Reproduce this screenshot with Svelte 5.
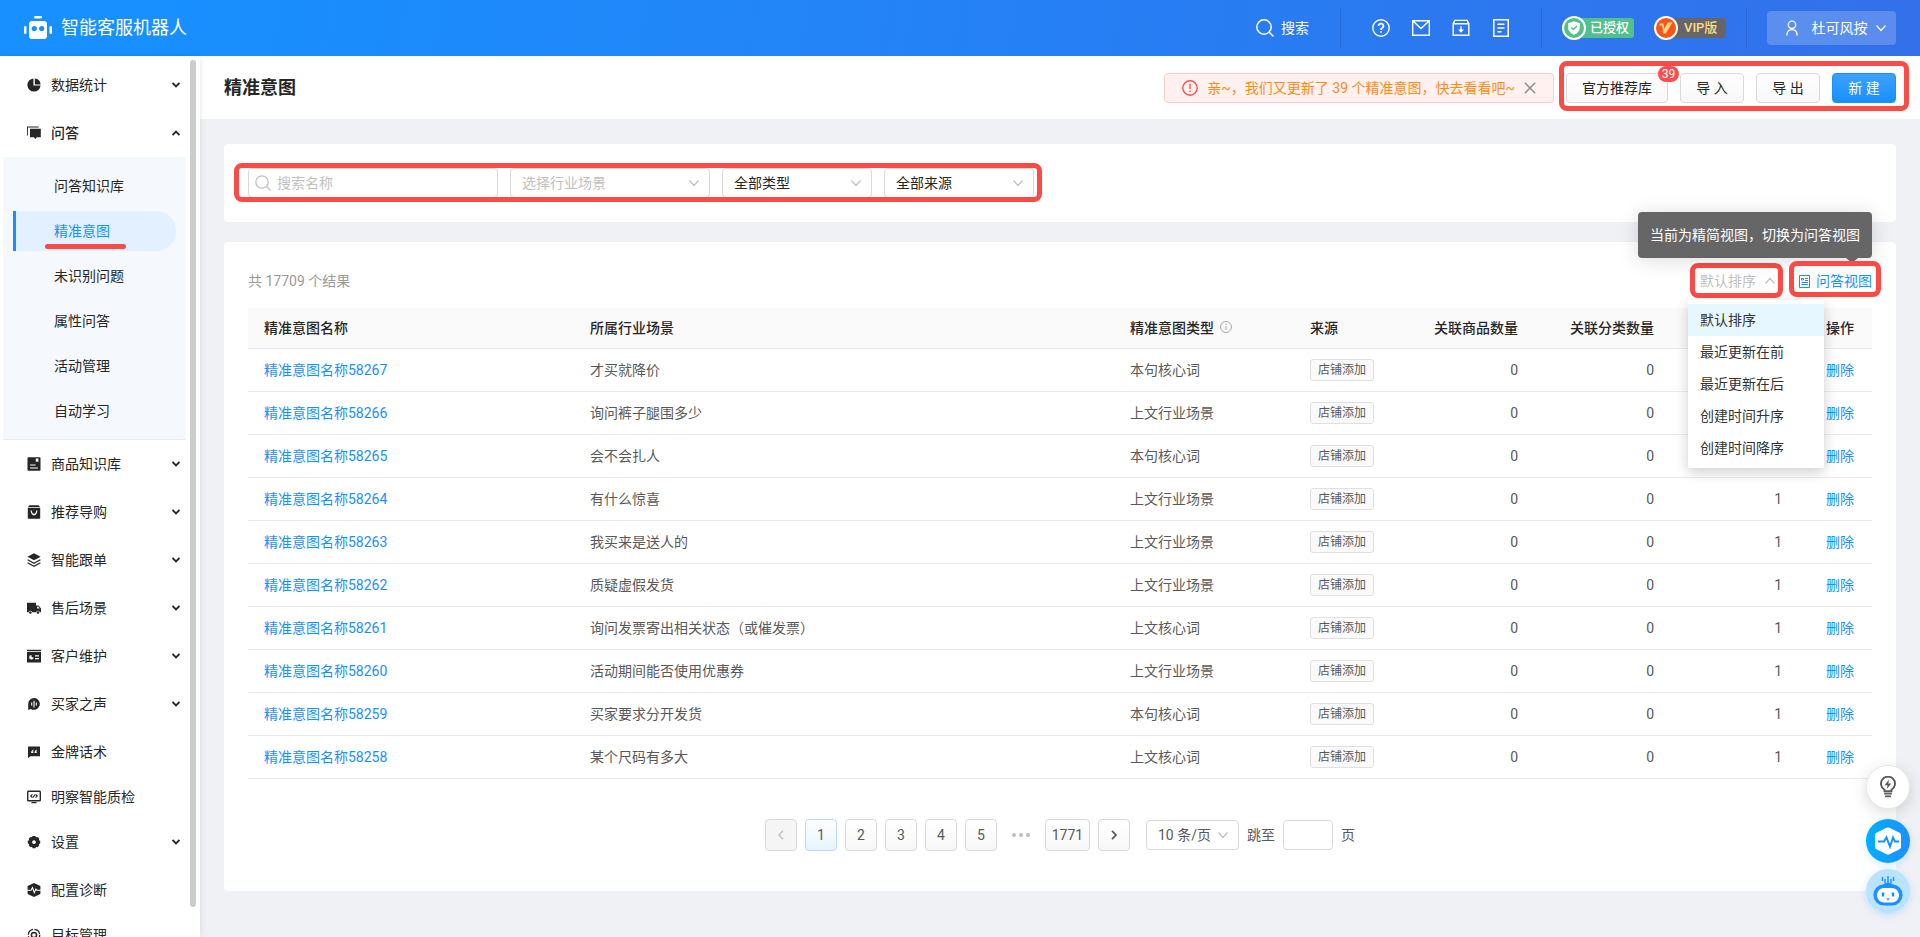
<svelte:options runes={true} />

<script lang="ts">
	type MenuItem = { label: string; icon: string; children?: string[]; leaf?: boolean };

	// sidebar glyphs, drawn on a 14x14 grid
	const icons: Record<string, string> = {
		pie: '<path d="M6.4 .4A6.6 6.6 0 1 0 13.6 7.6H6.4z"/><path d="M7.8 .4A6.6 6.6 0 0 1 13.6 6.4H7.8z"/>',
		chat: '<path d="M.3 9.4V1h11.4" fill="none" stroke="currentColor" stroke-width="1.2"/><path d="M3 2.8h10.8v8.4h-4L8.4 13l-1.6-1.8H3z"/>',
		book: '<path fill-rule="evenodd" d="M1.2 .3h11.6q.7 0 .7.7v12q0 .7-.7.7H1.2q-.7 0-.7-.7V1q0-.7.7-.7zM8.8 1.4v3.8l1.3-.9 1.3.9V1.4zM3 7.4h5.6v1H3zM3 10.4h8v1.1H3z"/>',
		bag: '<path d="M2.4 .2h9.2L13 2H1z"/><path fill-rule="evenodd" d="M.8 2.8h12.4V13q0 .8-.8.8H1.6q-.8 0-.8-.8zM3.6 5.6C3.8 12 10.2 12 10.4 5.6H9.2C9 10 5 10 4.8 5.6z"/>',
		layers: '<path d="M7 .2l6.6 3.5L7 7.2.4 3.7z"/><path d="M.6 6.8L7 10.2l6.4-3.4M.6 9.8L7 13.2l6.4-3.4" fill="none" stroke="currentColor" stroke-width="1.3"/>',
		truck: '<path d="M0 1.8h9v2.7h2.6L14 7.4v3.8h-1.1a1.9 1.9 0 0 0-3.7 0H5.3a1.9 1.9 0 0 0-3.7 0H0z"/><path d="M10.2 5.6h1.1l1.3 1.8h-2.4z" fill="#fff"/><circle cx="3.4" cy="11.5" r="1.3"/><circle cx="11" cy="11.5" r="1.3"/>',
		card: '<path d="M0 .8h14v1.4H0z"/><path fill-rule="evenodd" d="M0 3h14v10.4H0zM8 6.2v1.2h4V6.2zm0 2.8v1.2h4V9z"/><path d="M4.4 6A2.3 2.3 0 1 0 6.7 8.8L4.6 8z" fill="#fff"/>',
		voice: '<path d="M7 1a5.9 5.9 0 1 1-3.2 10.9L1.2 13V7A5.9 5.9 0 0 1 7 1z"/><path d="M4.7 5.4v3.2M7 3.8v6.6M9.3 5.4v3.2" stroke="#fff" stroke-width="1.1"/>',
		quote: '<path d="M1 1.6h12v9.6H3.4L1 13.2z"/><path d="M6.7 4.6q-2.6.5-2.6 3.5h2.2V6.2h-.9q.2-.7 1.3-1zM10.1 4.6q-2.6.5-2.6 3.5h2.2V6.2h-.9q.2-.7 1.3-1z" fill="#fff"/>',
		screen: '<rect x=".7" y="1.2" width="12.6" height="9.6" rx=".8" fill="none" stroke="currentColor" stroke-width="1.4"/><path d="M4.5 12.6h5M5.4 4.3L3.7 6l1.7 1.7M8.6 4.3L10.3 6 8.6 7.7M5.9 7.3l2.2-2.6" fill="none" stroke="currentColor" stroke-width="1.1"/>',
		gear: '<path fill-rule="evenodd" d="M5.6.9h2.8l.6 1.4 1.5-.4 1.7 1.7-.4 1.6 1.4.5v2.8l-1.4.5.4 1.6-1.7 1.7-1.5-.5-.6 1.4H5.6L5 11.8l-1.5.5-1.7-1.7.4-1.6L.8 8.500V5.700l1.400-.5-.4-1.600 1.700-1.700 1.500.4zM7 5.200a1.900 1.900 0 1 0 .01 0z"/>',
		pulse: '<path d="M7 0l6.400 3v8L7 14 .6 11V3z"/><path d="M0 7.200h4l1.500-2.700L7.300 9.600 9 6l.8 1.200H14" fill="none" stroke="#fff" stroke-width="1.1"/>',
		target: '<circle cx="7" cy="7" r="5.7" fill="none" stroke="currentColor" stroke-width="1.3" stroke-dasharray="7.4 1.5"/><circle cx="7" cy="7" r="2.6" fill="none" stroke="currentColor" stroke-width="1.5"/>'
	};

	const menu: MenuItem[] = [
		{ label: '数据统计', icon: 'pie' },
		{
			label: '问答',
			icon: 'chat',
			children: ['问答知识库', '精准意图', '未识别问题', '属性问答', '活动管理', '自动学习']
		},
		{ label: '商品知识库', icon: 'book' },
		{ label: '推荐导购', icon: 'bag' },
		{ label: '智能跟单', icon: 'layers' },
		{ label: '售后场景', icon: 'truck' },
		{ label: '客户维护', icon: 'card' },
		{ label: '买家之声', icon: 'voice' },
		{ label: '金牌话术', icon: 'quote', leaf: true },
		{ label: '明察智能质检', icon: 'screen', leaf: true },
		{ label: '设置', icon: 'gear' },
		{ label: '配置诊断', icon: 'pulse', leaf: true },
		{ label: '目标管理', icon: 'target', leaf: true }
	];

	const rows = [
		{ id: 58267, scene: '才买就降价', type: '本句核心词' },
		{ id: 58266, scene: '询问裤子腿围多少', type: '上文行业场景' },
		{ id: 58265, scene: '会不会扎人', type: '本句核心词' },
		{ id: 58264, scene: '有什么惊喜', type: '上文行业场景' },
		{ id: 58263, scene: '我买来是送人的', type: '上文行业场景' },
		{ id: 58262, scene: '质疑虚假发货', type: '上文行业场景' },
		{ id: 58261, scene: '询问发票寄出相关状态（或催发票）', type: '上文核心词' },
		{ id: 58260, scene: '活动期间能否使用优惠券', type: '上文行业场景' },
		{ id: 58259, scene: '买家要求分开发货', type: '本句核心词' },
		{ id: 58258, scene: '某个尺码有多大', type: '上文核心词' }
	];

	const sorts = ['默认排序', '最近更新在前', '最近更新在后', '创建时间升序', '创建时间降序'];

	let activeSub = $state('精准意图');
	let sort = $state('默认排序');
	let sortOpen = $state(true);
	let page = $state(1);
	let alertShown = $state(true);
</script>

{#snippet chevron(cls: string)}
	<svg class={cls} width="10" height="10" viewBox="0 0 10 10" aria-hidden="true">
		<path d="M.5 2.5L5 7.5l4.5-5" fill="none" stroke="currentColor" stroke-width="1.2" />
	</svg>
{/snippet}

<div class="app">
	<header class="top">
		<div class="brand">
			<svg width="28" height="24" viewBox="0 0 28 24" aria-hidden="true">
				<g fill="#fff">
					<rect x="10" y="0" width="8" height="2.5" rx="1.2" />
					<rect x="5" y="5" width="18" height="18" rx="3" />
					<rect x="0" y="10" width="2.5" height="8" rx="1.2" />
					<rect x="25.5" y="10" width="2.5" height="8" rx="1.2" />
				</g>
				<circle cx="10.3" cy="12.5" r="2.6" fill="#1890ff" />
				<circle cx="17.7" cy="12.5" r="2.6" fill="#1890ff" />
			</svg>
			<span>智能客服机器人</span>
		</div>
		<button class="top-search">
			<svg width="18" height="18" viewBox="0 0 18 18" fill="none" stroke="#fff" stroke-width="1.5" aria-hidden="true">
				<circle cx="8" cy="8" r="7.2" />
				<path d="M13 13l4.5 4.5" />
			</svg>
			搜索
		</button>
		<i class="divider"></i>
		<nav class="tools">
			<button aria-label="帮助">
				<svg width="18" height="18" viewBox="0 0 18 18" fill="none" stroke="#fff" stroke-width="1.4">
					<circle cx="9" cy="9" r="8.2" />
					<path d="M6.6 7a2.4 2.4 0 1 1 3.5 2.1Q9 9.7 9 11" stroke-width="1.7" />
					<path d="M9 12.2v1.6" stroke-width="1.8" />
				</svg>
			</button>
			<button aria-label="消息">
				<svg width="18" height="18" viewBox="0 0 18 18" fill="none" stroke="#fff" stroke-width="1.4">
					<path d="M.7 1.7h16.6v14.6H.7zM1 2l8 7.5L17 2" />
				</svg>
			</button>
			<button aria-label="下载">
				<svg width="18" height="18" viewBox="0 0 18 18" fill="none" stroke="#fff" stroke-width="1.4">
					<path d="M1.2 4.7L2.8 1.4h12.4l1.6 3.3M1.2 4.7h15.6v11.6H1.2z" />
					<path d="M9 7.2v5" />
					<path d="M6 10.5h6l-3 3.2z" fill="#fff" stroke="none" />
				</svg>
			</button>
			<button aria-label="文档">
				<svg width="18" height="18" viewBox="0 0 18 18" fill="none" stroke="#fff" stroke-width="1.5">
					<path d="M1.8 .8h14.4v16.4H1.8zM5.5 5.2h7M5.5 9h7M5.5 12.8h4" />
				</svg>
			</button>
		</nav>
		<i class="divider"></i>
		<div class="badges">
			<span class="plan auth">
				<svg width="24" height="24" viewBox="0 0 24 24" aria-hidden="true">
					<circle cx="12" cy="12" r="11" fill="#52c08a" stroke="#fff" stroke-width="2" />
					<path d="M12 5.2l5.8 2v4.6q0 4.6-5.8 7-5.8-2.4-5.8-7V7.2z" fill="#fff" />
					<path d="M9.3 11.5l2 2 3.6-3.6" fill="none" stroke="#52c08a" stroke-width="1.4" />
				</svg>
				已授权
			</span>
			<span class="plan vip">
				<svg width="24" height="24" viewBox="0 0 24 24" aria-hidden="true">
					<circle cx="12" cy="12" r="11" fill="#ff5517" stroke="#fff" stroke-width="2" />
					<path d="M5.8 7.5h3.4q1 2.3.9 5.4L13.8 6.500h4.700l-6.800 11H8.900q.5-4.500-1-8h-2.600z" fill="#ffd98a" />
				</svg>
				VIP版
			</span>
		</div>
		<i class="divider"></i>
		<button class="user">
			<svg width="12" height="16" viewBox="0 0 12 16" fill="none" stroke="#fff" stroke-width="1.3" aria-hidden="true">
				<circle cx="6" cy="4.8" r="3.7" />
				<path d="M.9 15.5q0-5.8 5.1-5.8t5.1 5.8" />
			</svg>
			杜可风按
			{@render chevron('caret')}
		</button>
	</header>

	<div class="body">
		<aside class="side">
			<ul class="menu">
				{#each menu as item}
					<li class:leaf={item.leaf}>
						<button class="entry" class:open={item.children}>
							<svg width="14" height="14" viewBox="0 0 14 14" fill="currentColor" aria-hidden="true">
								{@html icons[item.icon]}
							</svg>
							<span>{item.label}</span>
							{#if !item.leaf}
								<svg class="fold" width="8" height="6" viewBox="0 0 8 6" aria-hidden="true">
									<path d="M.5 1L4 4.5 7.5 1" fill="none" stroke="currentColor" stroke-width="1.8" />
								</svg>
							{/if}
						</button>
					</li>
					{#if item.children}
						<li>
							<ul class="sub">
								{#each item.children as child}
									<li>
										<button class="child" class:active={child === activeSub} onclick={() => (activeSub = child)}>
											<span>{child}</span>
										</button>
									</li>
								{/each}
							</ul>
						</li>
					{/if}
				{/each}
			</ul>
			<div class="thumb"></div>
		</aside>

		<main>
			<div class="title-bar">
				<h1>精准意图</h1>
				{#if alertShown}
					<div class="alert" role="alert">
						<svg width="16" height="16" viewBox="0 0 14 14" fill="none" stroke="#ff4d4f" stroke-width="1.2" aria-hidden="true">
							<circle cx="7" cy="7" r="6.3" />
							<path d="M7 3.2v4.6M7 9.2v1.4" />
						</svg>
						<span>亲~，我们又更新了 39 个精准意图，快去看看吧~</span>
						<button aria-label="关闭" onclick={() => (alertShown = false)}>
							<svg width="12" height="12" viewBox="0 0 12 12" fill="none" stroke="#8c8c8c" stroke-width="1.5">
								<path d="M.8 .8l10.4 10.4M11.2 .8L.8 11.2" />
							</svg>
						</button>
					</div>
				{/if}
				<div class="actions marked">
					<button class="btn">官方推荐库<b class="count">39</b></button>
					<button class="btn">导 入</button>
					<button class="btn">导 出</button>
					<button class="btn primary">新 建</button>
				</div>
			</div>

			<div class="content">
				<section class="card filter-card">
					<div class="filters marked">
						<label class="field search">
							<svg width="16" height="16" viewBox="0 0 16 16" fill="none" stroke="#bfbfbf" stroke-width="1.3" aria-hidden="true">
								<circle cx="7" cy="7" r="6.2" />
								<path d="M11.5 11.5l4 4" />
							</svg>
							<input type="text" placeholder="搜索名称" aria-label="搜索名称" />
						</label>
						<label class="field wide empty">
							<select aria-label="行业场景"><option>选择行业场景</option></select>
							{@render chevron('caret')}
						</label>
						<label class="field">
							<select aria-label="类型"><option>全部类型</option></select>
							{@render chevron('caret')}
						</label>
						<label class="field">
							<select aria-label="来源"><option>全部来源</option></select>
							{@render chevron('caret')}
						</label>
					</div>
				</section>

				<section class="card list-card">
					<div class="toolbar">
						<span class="total">共 17709 个结果</span>
						<div class="sorter marked">
							<button aria-haspopup="listbox" aria-expanded={sortOpen} onclick={() => (sortOpen = !sortOpen)}>
								{sort}
								{@render chevron(sortOpen ? 'caret up' : 'caret')}
							</button>
							{#if sortOpen}
								<ul class="options" role="listbox">
									{#each sorts as option}
										<li role="option" aria-selected={option === sort}>
											<button onclick={() => (sort = option)}>{option}</button>
										</li>
									{/each}
								</ul>
							{/if}
						</div>
						<div class="view marked">
							<button>
								<svg width="11" height="13" viewBox="0 0 11 13" fill="none" stroke="currentColor" aria-hidden="true">
									<path d="M.5 .5h10v12H.5z" />
									<path d="M2.5 3.500h2v1.500h-2zM6 3.500h3M6 5.500h3M2.500 7.500H9M2.500 9.500H9" />
								</svg>
								问答视图
							</button>
							<div class="tip" role="tooltip">当前为精简视图，切换为问答视图</div>
						</div>
					</div>

					<table>
						<colgroup>
							<col class="c-name" />
							<col />
							<col class="c-type" />
							<col class="c-source" />
							<col class="c-num" />
							<col class="c-num" />
							<col class="c-qa" />
							<col class="c-op" />
						</colgroup>
						<thead>
							<tr>
								<th>精准意图名称</th>
								<th>所属行业场景</th>
								<th>
									精准意图类型
									<svg class="info" width="12" height="12" viewBox="0 0 12 12" fill="none" stroke="#a6a6a6" aria-hidden="true">
										<circle cx="6" cy="6" r="5.5" />
										<path d="M6 5v4M6 2.8v1.2" />
									</svg>
								</th>
								<th>来源</th>
								<th class="right">关联商品数量</th>
								<th class="right">关联分类数量</th>
								<th></th>
								<th class="right">操作</th>
							</tr>
						</thead>
						<tbody>
							{#each rows as row (row.id)}
								<tr>
									<td><a href="#{row.id}">精准意图名称{row.id}</a></td>
									<td>{row.scene}</td>
									<td>{row.type}</td>
									<td><span class="tag">店铺添加</span></td>
									<td class="right">0</td>
									<td class="right">0</td>
									<td class="right">1</td>
									<td class="right"><button class="link">删除</button></td>
								</tr>
							{/each}
						</tbody>
					</table>

					<nav class="pager" aria-label="分页">
						<button class="page" disabled aria-label="上一页">
							<svg width="6" height="10" viewBox="0 0 6 10" fill="none" stroke="currentColor" stroke-width="1.4"><path d="M5 .8L1 5l4 4.2" /></svg>
						</button>
						{#each [1, 2, 3, 4, 5] as n}
							<button class="page" class:current={n === page} onclick={() => (page = n)}>{n}</button>
						{/each}
						<span class="dots"><i></i><i></i><i></i></span>
						<button class="page last" onclick={() => (page = 1771)}>1771</button>
						<button class="page" aria-label="下一页">
							<svg width="6" height="10" viewBox="0 0 6 10" fill="none" stroke="currentColor" stroke-width="1.8"><path d="M1 .8L5 5 1 9.2" /></svg>
						</button>
						<label class="field size">
							<select aria-label="每页条数"><option>10 条/页</option></select>
							{@render chevron('caret')}
						</label>
						<label class="jump">跳至 <input type="text" /> 页</label>
					</nav>
				</section>
			</div>
		</main>
	</div>

	<div class="float">
		<button class="bulb" aria-label="建议">
			<svg width="18" height="22" viewBox="0 0 18 22" fill="none" stroke="#595959" stroke-width="1.9">
				<path d="M5.5 15.2v-1.5A7 7 0 1 1 12.5 13.7v1.5z" />
				<path d="M5.2 17.6h7.6M6 20.4h6" stroke-width="1.7" />
				<path d="M10 3.5L5.6 9.2h3L7.8 13l4.6-5.6H9.3z" fill="#595959" stroke="none" />
			</svg>
		</button>
		<button class="diagnose" aria-label="诊断">
			<svg width="30" height="28" viewBox="0 0 30 28">
				<path d="M15 .5q1 0 2 .5l9.5 4.7Q28 6.5 28 8v12q0 1.5-1.5 2.3L17 27q-2 1-4 0l-9.5-4.7Q2 21.5 2 20V8q0-1.5 1.5-2.3L13 1q1-.5 2-.5z" fill="#fff" />
				<path d="M5 14.5h6l2.500-4 3.500 9 3-9 2 4h4" fill="none" stroke="#1492ff" stroke-width="2" />
			</svg>
		</button>
		<button class="robot" aria-label="机器人">
			<svg width="32" height="32" viewBox="0 0 32 32">
				<path d="M10.5 2v4M21.5 2v4M13 4v4M19 4v4M16 1v8" stroke="#1890ff" stroke-width="1.4" />
				<rect x="1.5" y="9.5" width="29" height="21" rx="10" fill="#1e90ff" />
				<path d="M10 10q6-5 12 0z" fill="#1e90ff" />
				<rect x="5" y="13" width="22" height="14.5" rx="7" fill="#fff" />
				<path d="M11 17.5v4M21 17.5v4" stroke="#1890ff" stroke-width="2.4" />
				<path d="M14 23.5h4l-2 2z" fill="#1890ff" />
			</svg>
		</button>
	</div>
</div>

<style>
	:global(body) {
		margin: 0;
		overflow: hidden;
	}

	.app {
		display: flex;
		flex-direction: column;
		height: 100vh;
		color: #262626;
		font: 14px/22px Roboto, 'Noto Sans CJK SC', sans-serif;
	}

	.app :is(button, input, select) {
		margin: 0;
		padding: 0;
		border: 0;
		outline: 0;
		background: none;
		color: inherit;
		font: inherit;
	}

	.app button {
		cursor: pointer;
	}

	svg {
		flex: none;
	}

	ul {
		margin: 0;
		padding: 0;
		list-style: none;
	}

	/* top bar */
	.top {
		display: flex;
		flex: none;
		align-items: center;
		height: 56px;
		padding: 0 24px;
		background: linear-gradient(100deg, #1890ff 8%, #3370ea);
		color: #fff;
	}

	.brand {
		display: flex;
		align-items: center;
		gap: 9px;
		margin-right: auto;
		font-size: 18px;
	}

	.app .top-search {
		display: flex;
		align-items: center;
		gap: 7px;
	}

	.divider {
		width: 1px;
		height: 40px;
		margin: 0 20px;
		background: rgba(0, 0, 0, 0.1);
	}

	.top-search + .divider {
		margin: 0 31px;
	}

	.tools + .divider {
		margin-left: 31px;
	}

	.tools {
		display: flex;
		gap: 22px;
	}

	.tools button,
	.tools svg {
		display: block;
	}

	.badges {
		display: flex;
		gap: 20px;
	}

	.plan {
		display: flex;
		align-items: center;
		gap: 4px;
		box-sizing: border-box;
		width: 72px;
		height: 20px;
		border-radius: 12px 4px 4px 12px;
		background: #52c08a;
		font-size: 13px;
		font-weight: 500;
	}

	.plan.vip {
		gap: 6px;
		background: #666;
		color: #ffd98a;
	}

	.app .user {
		display: flex;
		align-items: center;
		justify-content: center;
		width: 129px;
		height: 34px;
		padding-left: 8px;
		border-radius: 4px;
		background: rgba(255, 255, 255, 0.2);
	}

	.user svg:first-child {
		margin-right: 14px;
	}

	.user .caret {
		margin-left: 8px;
	}

	.body {
		display: flex;
		flex: 1;
		min-height: 0;
	}

	/* sidebar */
	.side {
		position: relative;
		z-index: 1;
		flex: none;
		width: 200px;
		overflow: hidden;
		background: #fff;
		box-shadow: 0 0 6px rgba(0, 21, 41, 0.1);
	}

	.menu {
		padding: 5px 14px 0 3px;
	}

	.app .entry {
		display: flex;
		align-items: center;
		gap: 10px;
		width: 100%;
		height: 48px;
		padding: 0 6px 0 24px;
	}

	.leaf {
		height: 45px;
	}

	.app .entry.open {
		font-weight: 500;
	}

	.fold {
		margin-left: auto;
	}

	.open .fold {
		transform: rotate(180deg);
	}

	.sub {
		display: flex;
		flex-direction: column;
		gap: 5px;
		padding: 9px 10px 8px;
		border-bottom: 1px solid #e2eefb;
		background: #f5f9fd;
	}

	.app .child {
		display: block;
		width: 100%;
		height: 40px;
		padding-left: 38px;
		border-left: 3px solid transparent;
		text-align: left;
	}

	.app .child.active {
		border-left-color: #1890ff;
		border-radius: 0 20px 20px 0;
		background: #e2f0ff;
		color: #1890ff;
	}

	.child span {
		position: relative;
	}

	.active span::after {
		content: '';
		position: absolute;
		inset: auto -16px -10px -9px;
		height: 5px;
		border-radius: 3px;
		background: #fa4b46;
	}

	.thumb {
		position: absolute;
		top: 4px;
		right: 4px;
		bottom: 30px;
		width: 6px;
		border-radius: 3px;
		background: #ccc;
	}

	/* page */
	main {
		flex: 1;
		min-width: 0;
		background: #f0f1f5;
	}

	.title-bar {
		display: flex;
		align-items: center;
		gap: 12px;
		height: 63px;
		padding: 0 24px;
		background: #fff;
	}

	h1 {
		margin: 0 auto 0 0;
		font-size: 18px;
		font-weight: 700;
	}

	.alert {
		display: flex;
		align-items: center;
		box-sizing: border-box;
		height: 30px;
		padding: 0 17px;
		border: 1px solid #ffccc7;
		border-radius: 4px;
		background: #fff1f0;
		color: #fa8c16;
	}

	.alert span {
		margin: 0 9px;
	}

	.alert button,
	.alert svg {
		display: block;
	}

	/* red frame round a group of controls */
	.marked {
		position: relative;
	}

	.marked::after {
		content: '';
		position: absolute;
		inset: var(--frame);
		border: 5px solid #fa4b46;
		border-radius: 8px;
		pointer-events: none;
	}

	.actions {
		--frame: -12px -13px -8px -7px;
		display: flex;
		gap: 12px;
	}

	.app .btn {
		position: relative;
		box-sizing: border-box;
		min-width: 64px;
		height: 30px;
		padding: 0 15px;
		border: 1px solid #d9d9d9;
		border-radius: 4px;
		background: linear-gradient(#fff, #f7f7f7);
		white-space: nowrap;
	}

	.app .btn.primary {
		border-color: #1890ff;
		background: linear-gradient(#3da0ff, #1890ff);
		color: #fff;
	}

	.count {
		position: absolute;
		top: -8px;
		right: -12px;
		z-index: 1;
		width: 21px;
		border-radius: 8px;
		background: #ff4d4f;
		color: #fff;
		font-size: 12px;
		font-weight: 400;
		line-height: 16px;
	}

	.content {
		display: flex;
		flex-direction: column;
		gap: 20px;
		padding: 25px 24px;
	}

	.card {
		border-radius: 4px;
		background: #fff;
	}

	.filter-card {
		padding: 24px;
	}

	.filters {
		--frame: -5px -8px -4px -14px;
		display: flex;
		gap: 12px;
		width: fit-content;
	}

	.field {
		display: flex;
		position: relative;
		align-items: center;
		box-sizing: border-box;
		width: 150px;
		height: 30px;
		border: 1px solid #d9d9d9;
		border-radius: 4px;
		background: #fff;
	}

	.field.wide {
		width: 200px;
	}

	.field.search {
		gap: 6px;
		width: 250px;
		padding: 0 6px;
	}

	.search input {
		flex: 1;
		min-width: 0;
	}

	input::placeholder {
		color: #bfbfbf;
		opacity: 1;
	}

	.app .field select {
		width: 100%;
		height: 100%;
		padding: 0 11px;
		appearance: none;
	}

	.app .field.empty select {
		color: #bfbfbf;
	}

	.field .caret {
		position: absolute;
		right: 10px;
		color: #bfbfbf;
		pointer-events: none;
	}

	.list-card {
		padding: 24px 24px 40px;
	}

	.toolbar {
		display: flex;
		align-items: center;
		height: 30px;
		margin-bottom: 12px;
	}

	.total {
		margin-right: auto;
		color: #999;
	}

	.sorter {
		--frame: -7px -8px -6px -10px;
		margin-right: 24px;
		color: #bfbfbf;
	}

	.app .sorter > button,
	.app .view > button {
		display: flex;
		align-items: center;
	}

	.app .sorter > button {
		gap: 9px;
	}

	.up {
		transform: rotate(180deg);
	}

	.options {
		position: absolute;
		top: 30px;
		left: -12px;
		z-index: 2;
		width: 136px;
		padding: 4px 0;
		border-radius: 2px;
		background: #fff;
		box-shadow: 0 4px 14px rgba(0, 0, 0, 0.2);
		color: #333;
	}

	.app .options button {
		width: 100%;
		height: 32px;
		padding-left: 12px;
		text-align: left;
	}

	.options [aria-selected='true'] {
		background: #e6f7ff;
	}

	.view {
		--frame: -9px -9px -5px -10px;
		color: #1890ff;
	}

	.app .view > button {
		gap: 6px;
	}

	.tip {
		position: absolute;
		right: 0;
		bottom: 34px;
		padding: 12px;
		border-radius: 4px;
		background: #666;
		box-shadow: 0 2px 20px rgba(0, 0, 0, 0.15);
		color: #fff;
		white-space: nowrap;
	}

	.tip::after {
		content: '';
		position: absolute;
		right: 14px;
		bottom: -5px;
		border: solid transparent;
		border-width: 5px 6px 0;
		border-top-color: #666;
	}

	/* table */
	table {
		width: 100%;
		border-collapse: separate;
		border-spacing: 0;
		table-layout: fixed;
		color: #595959;
	}

	.c-name {
		width: 326px;
	}

	.c-type {
		width: 180px;
	}

	.c-source {
		width: 104px;
	}

	.c-num {
		width: 136px;
	}

	.c-qa {
		width: 128px;
	}

	.c-op {
		width: 74px;
	}

	th,
	td {
		box-sizing: border-box;
		height: 43px;
		padding: 0 16px;
		border-bottom: 1px solid #ebebeb;
		text-align: left;
		white-space: nowrap;
	}

	th:last-child,
	td:last-child {
		padding-right: 18px;
	}

	th {
		height: 41px;
		background: #fafafa;
		color: #262626;
		font-weight: 500;
	}

	th.right,
	td.right {
		text-align: right;
	}

	.info {
		margin-left: 3px;
	}

	a,
	.app .link {
		color: #1890ff;
		text-decoration: none;
	}

	.tag {
		display: block;
		box-sizing: border-box;
		width: 64px;
		border: 1px solid #e0e0e0;
		border-radius: 3px;
		background: #fafafa;
		font-size: 12px;
		line-height: 20px;
		text-align: center;
	}

	/* pagination */
	.pager {
		display: flex;
		align-items: center;
		justify-content: center;
		gap: 8px;
		margin-top: 40px;
		color: #595959;
	}

	.app .page {
		display: flex;
		align-items: center;
		justify-content: center;
		box-sizing: border-box;
		min-width: 32px;
		height: 32px;
		border: 1px solid #d9d9d9;
		border-radius: 4px;
		background: linear-gradient(#fff, #f7f7f7);
	}

	.app .page.last {
		width: 45px;
	}

	.app .page.current {
		border-color: #bad7ff;
		background: linear-gradient(#fff, #e6f4ff);
	}

	.app .page:disabled {
		background: #f5f5f5;
		color: #bfbfbf;
	}

	.dots {
		display: flex;
		justify-content: center;
		gap: 3px;
		width: 32px;
	}

	.dots i {
		width: 4px;
		height: 4px;
		border-radius: 50%;
		background: #bfbfbf;
	}

	.field.size {
		width: 93px;
		margin-left: 8px;
	}

	.jump {
		display: flex;
		align-items: center;
		gap: 8px;
	}

	.app .jump input {
		box-sizing: border-box;
		width: 50px;
		height: 30px;
		border: 1px solid #d9d9d9;
		border-radius: 4px;
	}

	/* floating shortcuts */
	.float {
		display: flex;
		position: fixed;
		right: 10px;
		bottom: 24px;
		z-index: 3;
		flex-direction: column;
		gap: 6px;
	}

	.float button {
		display: flex;
		align-items: center;
		justify-content: center;
		width: 44px;
		height: 44px;
		border-radius: 50%;
	}

	.app .bulb {
		box-sizing: border-box;
		margin-bottom: 4px;
		border: 1px solid #e8e8e8;
		background: #fff;
		box-shadow: 0 4px 16px rgba(0, 0, 0, 0.15);
	}

	.app .diagnose {
		background: linear-gradient(90deg, #00b0fb, #1e90ff);
		box-shadow: 0 2px 8px rgba(24, 144, 255, 0.2);
	}

	.app .robot {
		background: #b8e4ff;
		box-shadow: 0 2px 8px rgba(24, 144, 255, 0.2);
	}
</style>
